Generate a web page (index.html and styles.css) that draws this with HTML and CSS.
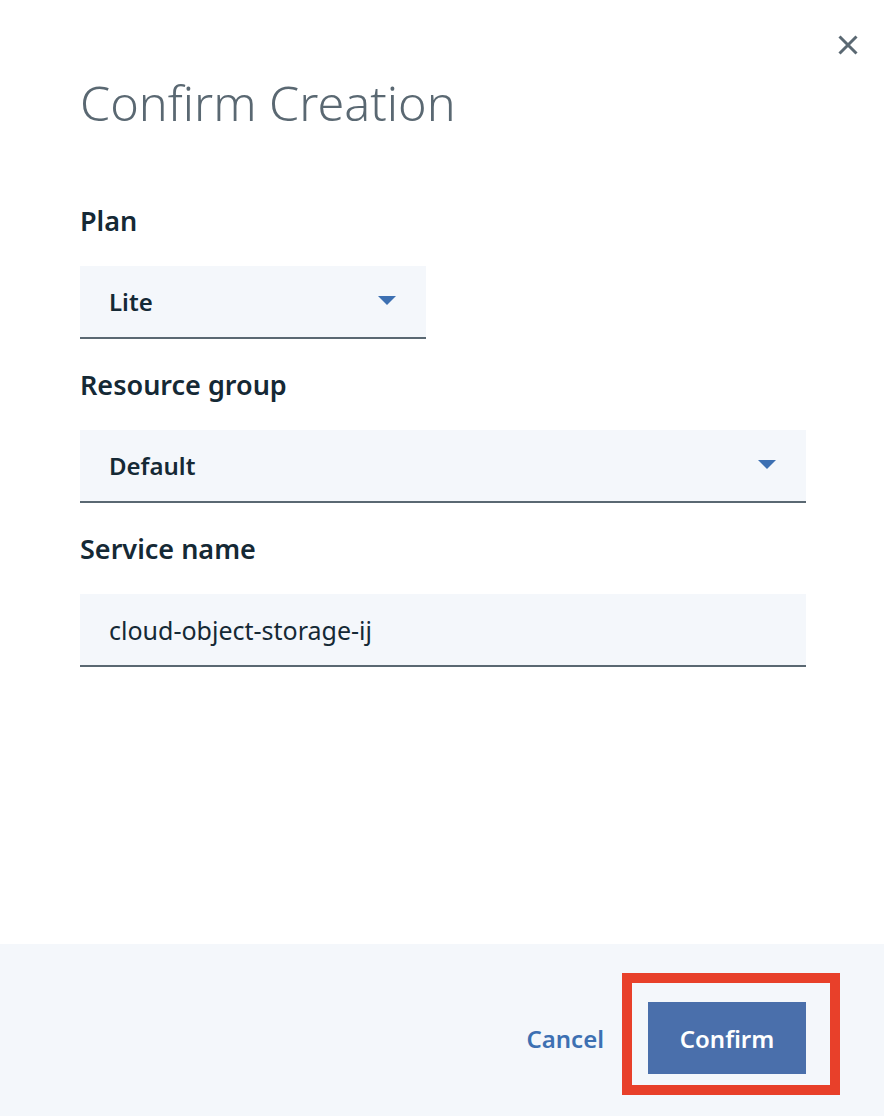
FILE: index.html
```html
<!DOCTYPE html>
<html lang="en">
<head>
<meta charset="utf-8">
<title>Confirm Creation</title>
<link rel="stylesheet" href="styles.css">
</head>
<body>
<div class="modal">
  <header class="modal-header">
    <h1 class="modal-title">Confirm Creation</h1>
    <button class="close-btn" aria-label="Close">
      <svg width="20" height="20" viewBox="0 0 20 20"><path d="M1.5 1.5 L18.5 18.5 M18.5 1.5 L1.5 18.5" stroke="#5a6872" stroke-width="3" fill="none"/></svg>
    </button>
  </header>
  <div class="modal-body">
    <div class="field">
      <label class="field-label">Plan</label>
      <div class="select select-narrow">
        <span class="select-value">Lite</span>
        <svg class="caret" width="18" height="9" viewBox="0 0 18 9"><polygon points="0,0 18,0 9,9" fill="#3d70b2"/></svg>
      </div>
    </div>
    <div class="field">
      <label class="field-label">Resource group</label>
      <div class="select">
        <span class="select-value">Default</span>
        <svg class="caret" width="18" height="9" viewBox="0 0 18 9"><polygon points="0,0 18,0 9,9" fill="#3d70b2"/></svg>
      </div>
    </div>
    <div class="field">
      <label class="field-label">Service name</label>
      <div class="text-input"><span class="input-value">cloud-object-storage-ij</span></div>
    </div>
  </div>
  <footer class="modal-footer">
    <button class="btn-cancel">Cancel</button>
    <div class="highlight">
      <button class="btn-primary">Confirm</button>
    </div>
  </footer>
</div>
</body>
</html>
```
FILE: styles.css
```css
* { box-sizing: border-box; }
html, body { margin: 0; padding: 0; }
body {
  font-family: "Noto Sans", "Open Sans", sans-serif;
  background: #ffffff;
  color: #152935;
}
.modal {
  height: 1116px;
  width: 884px;
  display: flex;
  flex-direction: column;
}
.modal-header {
  display: flex;
  justify-content: space-between;
  align-items: flex-start;
  padding: 0 26px 0 80px;
}
.modal-title {
  margin: 0;
  padding-top: 72px;
  font-size: 48.5px;
  font-weight: 300;
  line-height: 60px;
  color: #5a6872;
}
.close-btn {
  margin-top: 35px;
  background: none;
  border: 0;
  padding: 0;
  width: 20px;
  height: 20px;
  cursor: pointer;
}
.close-btn svg { display: block; }
.modal-body {
  flex: 1;
  padding: 70px 78px 0 80px;
  display: flex;
  flex-direction: column;
  gap: 27px;
}
.field { display: flex; flex-direction: column; }
.field-label {
  font-size: 27px;
  font-weight: 600;
  line-height: 38px;
  margin-bottom: 26px;
  color: #152935;
}
.select, .text-input {
  height: 73px;
  background: #f4f7fb;
  border-bottom: 2px solid #5a6872;
  display: flex;
  align-items: center;
  padding: 0 30px 0 29px;
}
.select { justify-content: space-between; }
.select-narrow { width: 346px; }
.select-value {
  font-size: 24px;
  font-weight: 600;
  color: #152935;
}
.caret { display: block; margin-top: -2px; }
.input-value {
  font-size: 25px;
  font-weight: 400;
  color: #152935;
}
.modal-footer {
  height: 172px;
  background: #f4f7fb;
  display: flex;
  justify-content: flex-end;
  align-items: baseline;
  padding: 29px 44px 0 0;
}
.btn-cancel {
  background: none;
  border: 0;
  padding: 0;
  margin-right: 18px;
  font-family: inherit;
  font-size: 24px;
  font-weight: 600;
  color: #3d70b2;
  cursor: pointer;
}
.highlight {
  border: 10px solid #e8402a;
  padding: 19px 24px 11px 16px;
  display: flex;
}
.btn-primary {
  width: 158px;
  height: 72px;
  background: #4a6fab;
  border: 0;
  color: #ffffff;
  font-family: inherit;
  font-size: 24px;
  font-weight: 600;
  cursor: pointer;
}
```
